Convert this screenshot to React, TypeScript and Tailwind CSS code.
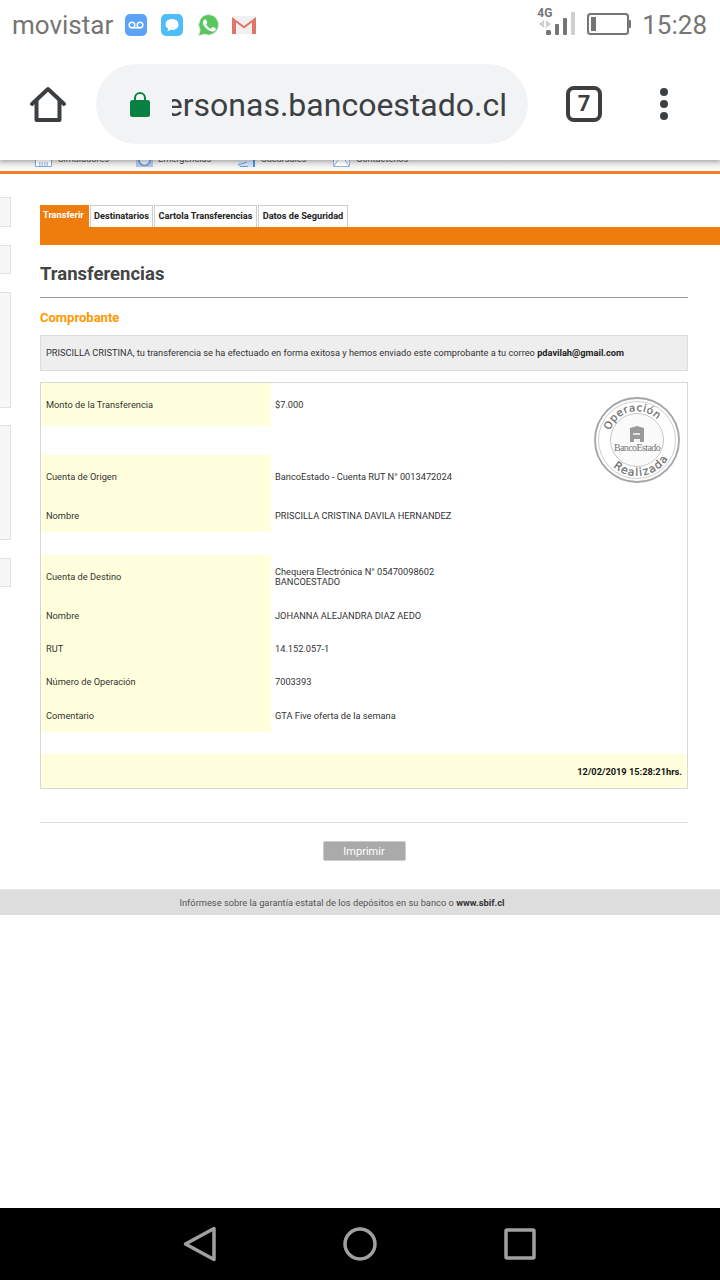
import { Fragment } from 'react';

const rows = [
  { label: 'Monto de la Transferencia', value: ['$7.000'], h: 'h-[43px]', after: 'h-[29px]' },
  { label: 'Cuenta de Origen', value: ['BancoEstado - Cuenta RUT N° 0013472024'], h: 'h-[42px]', pad: 'pt-[2px]' },
  { label: 'Nombre', value: ['PRISCILLA CRISTINA DAVILA HERNANDEZ'], h: 'h-[35px]', pad: 'pt-[3px]', after: 'h-[23px]' },
  { label: 'Cuenta de Destino', value: ['Chequera Electrónica N° 05470098602', 'BANCOESTADO'], h: 'h-[44px]' },
  { label: 'Nombre', value: ['JOHANNA ALEJANDRA DIAZ AEDO'], h: 'h-[33px]' },
  { label: 'RUT', value: ['14.152.057-1'], h: 'h-[33px]' },
  { label: 'Número de Operación', value: ['7003393'], h: 'h-[33px]' },
  { label: 'Comentario', value: ['GTA Five oferta de la semana'], h: 'h-[34px]', pad: 'pt-[1px]', after: 'h-[22px]' },
];

const tabs = [
  { label: 'Destinatarios', w: 'w-[63px]' },
  { label: 'Cartola Transferencias', w: 'w-[103px]' },
  { label: 'Datos de Seguridad', w: 'w-[90px]' },
];

const sideBoxes = ['h-[30px] mb-[18px]', 'h-[29px] mb-[18px]', 'h-[116px] mb-[17px]', 'h-[115px] mb-[18px]', 'h-[29px]'];

const StatusIcons = () => (
  <div className="flex items-center ml-[12px]">
    <svg width="22" height="22" viewBox="1 1 22 22">
      <rect x="1" y="1" width="22" height="22" rx="5" fill="#5ba4f5" />
      <circle cx="8" cy="12" r="2.800" fill="none" stroke="#fff" strokeWidth="1.500" />
      <circle cx="16" cy="12" r="2.800" fill="none" stroke="#fff" strokeWidth="1.500" />
      <path d="M8 14.800h8" stroke="#fff" strokeWidth="1.500" />
    </svg>
    <svg width="22" height="22" viewBox="1 1 22 22" className="ml-[14px]">
      <rect x="1" y="1" width="22" height="22" rx="5" fill="#4fbdf9" />
      <path d="M12 6c3.900 0 6.500 2.400 6.500 5.500S15.900 17 12 17c-.6 0-1.200-.1-1.700-.2L7.500 18.500l.6-3C6.500 14.500 5.500 13.100 5.500 11.500 5.500 8.400 8.100 6 12 6z" fill="#fff" />
    </svg>
    <svg width="24" height="24" viewBox="0 0 24 24" className="ml-[14px]">
      <path d="M12 1.500a10.300 10.300 0 0 0-8.900 15.500L1.500 22.800l5.900-1.500A10.300 10.300 0 1 0 12 1.500z" fill="#58c760" stroke="#e8e8e8" strokeWidth="1" />
      <path d="M9.200 7c-.2-.4-.4-.4-.7-.4h-.6c-.2 0-.6.100-.9.400-.3.400-1.100 1.100-1.100 2.700s1.200 3.100 1.300 3.300c.2.200 2.300 3.500 5.500 4.800 2.700 1 3.200.8 3.800.8.600-.1 1.900-.8 2.200-1.500.3-.8.300-1.400.2-1.500-.1-.2-.3-.2-.6-.4l-2.200-1.100c-.3-.1-.5-.2-.7.100l-1 1.200c-.2.200-.4.300-.7.100-.3-.2-1.400-.5-2.600-1.600-1-.9-1.600-1.900-1.800-2.300-.2-.3 0-.5.100-.6l.5-.6c.2-.2.200-.3.300-.5.100-.2.100-.4 0-.6L9.200 7z" fill="#fff" />
    </svg>
    <svg width="24" height="18" viewBox="1 2 24 18" className="ml-[11px]">
      <rect x="1" y="2" width="24" height="18" rx="1" fill="#f0f0f0" />
      <path d="M1 20V3l12 9L25 3v17h-4V8.500l-8 6-8-6V20z" fill="#e0766a" />
    </svg>
  </div>
);

const Stamp = () => (
  <svg width="90" height="90" viewBox="0 0 90 90" className="absolute left-[551px] top-[12px]">
    <defs>
      <path id="stampTop" d="M18 35.700A28.500 28.500 0 0 1 72 35.300" />
      <path id="stampBottom" d="M21.200 72A36 36 0 0 0 79 57" />
    </defs>
    <circle cx="45" cy="45" r="42" fill="#fff" stroke="#a4a4a4" strokeWidth="1.800" />
    <circle cx="45" cy="45" r="38.500" fill="none" stroke="#cfcfcf" strokeWidth="1" />
    <circle cx="45" cy="45" r="26.500" fill="#fafafa" stroke="#c8c8c8" strokeWidth="1" />
    <text fontFamily="'DejaVu Sans', sans-serif" fontSize="10.500" fill="#6a6a6a" stroke="#6a6a6a" strokeWidth="0.200" letterSpacing="0.500">
      <textPath href="#stampTop">Operación</textPath>
    </text>
    <text fontFamily="'DejaVu Sans', sans-serif" fontSize="11" fill="#6a6a6a" stroke="#6a6a6a" strokeWidth="0.200" letterSpacing="1.200">
      <textPath href="#stampBottom">Realizada</textPath>
    </text>
    <path d="M38 47V33l7-2 7 2v14h-4v-3h-6v3z" fill="#9a9a9a" />
    <rect x="41" y="38" width="7" height="2" fill="#e4e4e4" />
    <text x="45" y="56" textAnchor="middle" fontFamily="'Liberation Serif', serif" fontSize="10" letterSpacing="-0.600" fill="#777">BancoEstado</text>
  </svg>
);

export default function App() {
  return (
    <div className="w-[720px] h-[1280px] bg-white flex flex-col overflow-hidden font-['Roboto',sans-serif]">
      {/* Chrome */}
      <header className="relative z-10 h-[160px] bg-white shadow-[0_1px_5px_rgba(0,0,0,0.3)] shrink-0">
        <div className="h-[52px] flex items-center pb-[2px] pl-[12px] pr-[13px] text-[#757575]">
          <span className="text-[26px] leading-none">movistar</span>
          <StatusIcons />
          <div className="ml-auto flex items-center">
            <div className="relative w-[42px] h-[36px] mr-[9px]">
              <span className="absolute left-[1px] top-[0px] text-[12px] font-bold leading-none text-[#757575]">4G</span>
              <svg width="42" height="36" viewBox="0 0 42 36" className="block">
                <path d="M8 13l-5 4 5 4zM10 13l5 4-5 4z" fill="#cfcfcf" />
                <rect x="10" y="23" width="5" height="5" rx="1.500" fill="#757575" />
                <rect x="19" y="17" width="4" height="11" rx="1" fill="#757575" />
                <rect x="27" y="11" width="4" height="17" rx="1" fill="#757575" />
                <rect x="35" y="5" width="4" height="23" rx="1" fill="#d0d0d0" />
              </svg>
            </div>
            <svg width="44" height="22" viewBox="0 0 44 22" className="mr-[11px] -mt-[2px]">
              <rect x="1" y="1" width="40" height="20" rx="2.500" fill="none" stroke="#757575" strokeWidth="2" />
              <rect x="4" y="4" width="5" height="14" fill="#757575" />
              <rect x="41.500" y="7" width="2.500" height="8" rx="1" fill="#757575" />
            </svg>
            <span className="text-[26px] leading-none">15:28</span>
          </div>
        </div>
        <div className="h-[108px] flex items-start pt-[12px] text-[#3c4043]">
          <div className="w-[96px] h-[80px] flex items-center justify-center">
            <svg width="38" height="38" viewBox="0 0 38 38" fill="none" stroke="#3c4043" strokeWidth="4" strokeLinejoin="round" strokeLinecap="round">
              <path d="M3 19L19 4l16 15" />
              <path d="M7.500 16v19h23V16" />
            </svg>
          </div>
          <div className="w-[432px] h-[80px] rounded-[40px] bg-[#f1f3f4] flex items-center pl-[34px]">
            <svg width="20" height="26" viewBox="0 0 20 26" className="shrink-0">
              <path d="M5 11V7a5 5 0 0 1 10 0v4" fill="none" stroke="#0b8043" strokeWidth="2" />
              <rect y="9" width="20" height="17" rx="2.500" fill="#0b8043" />
            </svg>
            <div className="ml-[22px] w-[335px] pt-[1px] overflow-hidden flex justify-end">
              <span className="text-[32px] leading-none whitespace-nowrap">personas.bancoestado.cl</span>
            </div>
          </div>
          <div className="ml-[38px] mt-[22px] w-[36px] h-[36px] rounded-[8px] border-[4px] border-[#3c4043] flex items-center justify-center text-[22px] font-bold leading-none">7</div>
          <div className="ml-[58px] mt-[24px] flex flex-col gap-[4px]">
            <span className="w-[8px] h-[8px] rounded-full bg-[#3c4043]" />
            <span className="w-[8px] h-[8px] rounded-full bg-[#3c4043]" />
            <span className="w-[8px] h-[8px] rounded-full bg-[#3c4043]" />
          </div>
        </div>
      </header>

      {/* Site nav, scrolled almost off */}
      <div className="h-[11px] shrink-0 overflow-hidden bg-gradient-to-b from-[#e0e0e0] to-white flex text-[9.200px] text-[#555] leading-none">
        <div className="flex items-start">
          <svg width="17" height="7" viewBox="0 0 17 7" className="ml-[35px]">
            <path d="M.5 0v6.500h16V0" fill="#fff" stroke="#7fa9dc" />
            <path d="M4 3h9M4 5h9" stroke="#6b93c8" strokeDasharray="1.500 1" />
          </svg>
          <span className="ml-[6px] -mt-[6px]">Simuladores</span>
          <svg width="17" height="7" viewBox="0 0 17 7" className="ml-[27px]">
            <rect width="17" height="7" fill="#a9c6e8" />
            <path d="M3 0a5.500 5.500 0 0 0 11 0" fill="#dfe9f5" stroke="#6f94c2" strokeWidth="1.500" />
          </svg>
          <span className="ml-[5px] -mt-[6px]">Emergencias</span>
          <svg width="17" height="7" viewBox="0 0 17 7" className="ml-[27px]">
            <rect width="17" height="7" fill="#cfe0f3" />
            <path d="M0 5l9-3M2 6.500h8" stroke="#6f9ad0" />
            <rect x="15" width="2" height="7" fill="#4f8bd3" />
          </svg>
          <span className="ml-[6px] -mt-[6px]">Sucursales</span>
          <svg width="17" height="7" viewBox="0 0 17 7" className="ml-[27px]">
            <path d="M.5 0v6.500h16V0M5 0L1 6M12 0l4 6" fill="#fff" stroke="#8fb4e0" />
          </svg>
          <span className="ml-[6px] -mt-[6px]">Contáctenos</span>
        </div>
      </div>
      <div className="h-[3px] shrink-0 bg-[#f47e20]" />

      {/* Page */}
      <div className="flex flex-1 min-h-0">
        <aside className="w-[11px] pt-[23px] shrink-0">
          {sideBoxes.map((cls, i) => (
            <div key={i} className={`${cls} bg-[#f7f7f7] border border-l-0 border-[#e2e2e2]`} />
          ))}
        </aside>
        <main className="flex-1 flex flex-col min-w-0">
          <div className="ml-[29px] mr-[32px]">
            {/* Tabs */}
            <div className="mt-[31px] -mr-[32px]">
              <div className="flex h-[22px] gap-[1px] text-[9.200px] font-bold leading-none">
                <div className="w-[49px] bg-[#ef7d0e] text-white pl-[3px] pt-[5px]">Transferir</div>
                {tabs.map((t) => (
                  <div key={t.label} className={`${t.w} border border-b-0 border-[#cfcfcf] bg-white text-[#222] pt-[5px] text-center whitespace-nowrap`}>
                    {t.label}
                  </div>
                ))}
              </div>
              <div className="h-[18px] bg-[#ef7d0e]" />
            </div>

            <h1 className="mt-[19px] text-[18.500px] leading-[21px] font-bold text-[#444]">Transferencias</h1>
            <div className="mt-[12px] h-[1px] bg-[#999]" />
            <h2 className="mt-[12px] text-[13px] leading-[15px] font-bold text-[#ff9900]">Comprobante</h2>

            <div className="mt-[10px] h-[36px] bg-[#eeeeee] border border-[#dddddd] flex items-center pl-[5px] text-[9.230px] text-[#333] whitespace-nowrap">
              <span>PRISCILLA CRISTINA, tu transferencia se ha efectuado en forma exitosa y hemos enviado este comprobante a tu correo&nbsp;</span>
              <b className="text-[#222]">pdavilah@gmail.com</b>
            </div>

            {/* Receipt */}
            <section className="relative mt-[11px] border border-[#d8d8d8] text-[9.250px] leading-[10px] text-[#333]">
              <Stamp />
              {rows.map((r, i) => (
                <Fragment key={i}>
                  <div className={`${r.h} flex items-center`}>
                    <div className={`w-[230px] self-stretch flex items-center bg-[#ffffdd] pl-[5px] ${r.pad ?? ''}`}>{r.label}</div>
                    <div className={`pl-[4px] ${r.pad ?? ''}`}>
                      {r.value.map((v) => (
                        <div key={v}>{v}</div>
                      ))}
                    </div>
                  </div>
                  {r.after && <div className={r.after} />}
                </Fragment>
              ))}
              <div className="h-[34px] bg-[#ffffdd] flex items-center justify-end pr-[5px] pt-[1px] font-bold text-[#111]">
                12/02/2019 15:28:21hrs.
              </div>
            </section>

            <div className="mt-[33px] h-[1px] bg-[#dddddd]" />
            <div className="mt-[18px] flex justify-center">
              <button className="w-[83px] h-[20px] bg-[#aaaaaa] border border-[#cccccc] rounded-[2px] text-[11px] leading-none text-white">Imprimir</button>
            </div>
          </div>
          <div className="h-[28px]" />
          <div className="-ml-[11px] h-[26px] bg-[#dddddd] border-t border-[#e8e8e8] flex items-center justify-center pr-[36px] text-[9.300px] text-[#555]">
            <span>Infórmese sobre la garantía estatal de los depósitos en su banco o&nbsp;</span>
            <b className="text-[#333]">www.sbif.cl</b>
          </div>
        </main>
      </div>

      {/* Android nav */}
      <nav className="h-[72px] shrink-0 bg-black flex items-center justify-center pr-[2px]">
        <svg width="33" height="36" viewBox="0 0 33 36" fill="none" stroke="#a0a0a0" strokeWidth="3.500" strokeLinejoin="round">
          <path d="M2.500 18L31 2.500v31z" />
        </svg>
        <svg width="34" height="34" viewBox="0 0 34 34" fill="none" stroke="#a0a0a0" strokeWidth="3.500" className="ml-[127px]">
          <circle cx="17" cy="17" r="15" />
        </svg>
        <svg width="32" height="32" viewBox="0 0 32 32" fill="none" stroke="#a0a0a0" strokeWidth="3.500" strokeLinejoin="round" className="ml-[127px]">
          <rect x="2" y="2" width="28" height="28" rx="1" />
        </svg>
      </nav>
    </div>
  );
}
